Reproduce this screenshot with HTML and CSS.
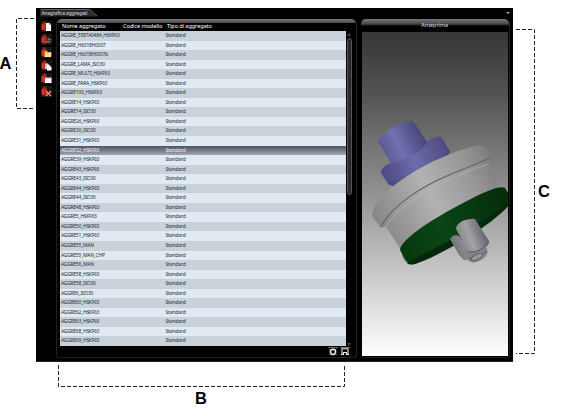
FILE: index.html
```
<!DOCTYPE html>
<html lang="it">
<head>
<meta charset="utf-8">
<title>Anagrafica aggregati</title>
<link rel="stylesheet" href="styles.css">
</head>
<body>
<div class="figure">
  <svg class="callout-a" viewBox="0 0 36 354"><path class="dash" d="M34 10.500H16.500V100.500H34"/><text x="-.5" y="61">A</text></svg>
  <main class="window">
    <header class="titlebar"><div class="tab"><svg viewBox="0 0 64 8" preserveAspectRatio="none"><path d="M0 1Q1 0 3 0H53Q55 0 57 3L63 7.500H0Z" fill="#2b2b2b"/><path d="M1 .5H53Q55 .5 57 3L62 7" fill="none" stroke="#727272" stroke-width=".8"/></svg><span>Anagrafica aggregati</span></div><svg class="arrow" viewBox="0 0 4 2"><path d="M0 0H4L2 2Z"/></svg></header>
    <div class="content">
      <nav class="tools">
        <svg viewBox="0 0 11 11"><use href="#drum"/><path d="M5 2H8L10 4V10H5Z" fill="#fff"/><path d="M8 2V4H10" fill="#bbb"/></svg>
        <svg viewBox="0 0 11 11"><use href="#drum"/><path d="M5 7L7 4L10 6L9 8H5Z" fill="#37352e"/><path d="M4.500 8H9.500M7 4.500L10 6" stroke="#a49a75" fill="none"/></svg>
        <svg viewBox="0 0 11 11"><use href="#drum"/><path d="M3.500 4H6L7 5H10V10H3.500Z" fill="#e9b64d"/><path d="M4.500 6H10.500L10 10H3.500Z" fill="#ffe08c"/></svg>
        <svg viewBox="0 0 11 11"><use href="#drum"/><path d="M4 3.500H7L9 6V9H4Z" fill="#c9c9c9"/><path d="M6 5H8L10.500 7.500V10.500H6Z" fill="#fff"/></svg>
        <svg viewBox="0 0 11 11"><use href="#drum"/><path d="M4 5H10.500V10H4Z" fill="#fff"/><path d="M4 5H10.500" stroke="#c8b9b9"/></svg>
        <svg viewBox="0 0 11 11"><use href="#drum"/><path d="M5 5L10 10M10 5L5 10" stroke="#ee8580" stroke-width="1.500"/></svg>
      </nav>
      <section class="list-panel">
        <div class="columns"><span>Nome aggregato</span><span>Codice modello</span><span>Tipo di aggregato</span></div>
        <div class="table-area">
          <div class="rows" id="rows"></div>
          <div class="scroll"><svg viewBox="0 0 4 3"><path d="M0 3L2 0L4 3Z"/></svg><i></i><svg class="down" viewBox="0 0 4 3"><path d="M0 0H4L2 3Z"/></svg></div>
        </div>
        <footer class="actions">
          <svg viewBox="0 0 10 9"><path d="M0 .5H10" stroke="#666"/><circle cx="5" cy="4.800" r="2.600" fill="none" stroke="#eee" stroke-width="1.500"/><path d="M1.500 2L3 3M8.500 2L7 3M1.500 7.500L3 6.500M8.500 7.500L7 6.500" stroke="#bbb"/></svg>
          <svg viewBox="0 0 10 9"><path d="M0 .5H10" stroke="#777"/><path d="M2 8V1.700H8V8M3.500 8V5.500H6.500V8" fill="none" stroke="#e4e4e4" stroke-width="1.100"/><path d="M1 7.500H3M7 7.500H9" stroke="#eee"/></svg>
        </footer>
      </section>
      <section class="preview-panel">
        <h2>Anteprima</h2>
        <svg class="preview" viewBox="362 32 146 324" preserveAspectRatio="none">
          <defs>
            <g id="drum"><path d="M.5 3L2.500 2V.5H4.500V2L6 3V8.500L4 10L.5 8.500Z" fill="#b52718"/><path d="M2 3.500V8.500" stroke="#e35c40"/></g>
            <linearGradient id="bg" x2="0" y2="1"><stop stop-color="#363636"/><stop offset=".2" stop-color="#555"/><stop offset=".5" stop-color="#929292"/><stop offset=".75" stop-color="#cacaca"/><stop offset="1" stop-color="#fff"/></linearGradient>
            <linearGradient id="blue" gradientUnits="userSpaceOnUse" x1="382" y1="160" x2="447" y2="130"><stop stop-color="#504f87"/><stop offset=".4" stop-color="#6e6cac"/><stop offset="1" stop-color="#464476"/></linearGradient>
            <linearGradient id="neck" gradientUnits="userSpaceOnUse" x1="381" y1="150" x2="422" y2="130"><stop stop-color="#5a5994"/><stop offset=".4" stop-color="#7270b0"/><stop offset="1" stop-color="#454377"/></linearGradient>
            <linearGradient id="gray" gradientUnits="userSpaceOnUse" x1="375" y1="225" x2="500" y2="160"><stop stop-color="#858585"/><stop offset=".45" stop-color="#b3b1b1"/><stop offset=".75" stop-color="#999"/><stop offset="1" stop-color="#777"/></linearGradient>
            <linearGradient id="green" gradientUnits="userSpaceOnUse" x1="400" y1="250" x2="507" y2="200"><stop stop-color="#06370d"/><stop offset=".4" stop-color="#0a4517"/><stop offset="1" stop-color="#042d0a"/></linearGradient>
            <linearGradient id="shaft" gradientUnits="userSpaceOnUse" x1="454" y1="244" x2="487" y2="231"><stop stop-color="#77757a"/><stop offset=".5" stop-color="#a3a1a7"/><stop offset="1" stop-color="#5c5a61"/></linearGradient>
          </defs>
          <path d="M362 32H508V356H362Z" fill="url(#bg)"/>
          <path d="M381 173C381 168 385 165 391 163L427 141C434 137 440 135 442 138L450 151L448 156L451 164L397 193L395 187L388 184Z" fill="url(#blue)"/>
          <path d="M378 142C381 132 401 121 413 121L427 142C423 151 404 161 391 163Z" fill="url(#neck)"/>
          <path d="M388 184C404 183 440 164 450 152" fill="none" stroke="#44437a"/><path d="M395 187Q421 180 448 158" fill="none" stroke="#44437a" stroke-width="1.500"/><path d="M401 186Q425 179 446 162" fill="none" stroke="#6967a3" stroke-width="1.500"/>
          <path d="M372 216C372 201 398 179 430 163C456 151 480 142 485 147L490 156L489 164L498 187L505 197C500 215 454 247 415 262C408 265 403 264 401 250L387 228L380 227Z" fill="url(#gray)"/>
          <path d="M381 227C388 211 411 193 438 180C461 169 480 163 490 158" fill="none" stroke="#646464" stroke-width="1.200"/><path d="M385 229C392 212 418 195 443 183C465 172 481 166 489 164" fill="none" stroke="#bcbcbc" stroke-width=".6"/>
          <path d="M400 250C401 239 432 219 465 202C484 192 500 185 505 188L508 193V206C492 223 444 249 415 264C407 266 405 259 400 250Z" fill="url(#green)"/>
          <path d="M407 263.500C418 256 432 251 450 240C472 227 498 214 507 202L508 206C492 225 440 256 415 264Q410 265 407 263.500Z" fill="#032709"/>
          <path d="M450 239C452 235 457 234 460 237L468 250L471 256Q469 261 464 260L459 255Z" fill="url(#shaft)"/>
          <path d="M465 249L486 246L488 252Q485 260 476 262Q470 264 467 258Z" fill="#858389"/>
          <path d="M456 229C456 222 468 218 475 219L489 241C491 246 477 254 468 252Z" fill="url(#shaft)"/>
          <path d="M468 252Q481 253 488 243M469 258Q477 261 486 251" fill="none" stroke="#55535a"/><ellipse cx="477" cy="257" rx="6" ry="2.500" transform="rotate(-27 477 257)" fill="#99979d" stroke="#66636a"/>
        </svg>
      </section>
    </div>
  </main>
  <svg class="callout-c" viewBox="0 0 54 354"><path class="dash" d="M3 21.500H21.500V345.500H3"/><text x="25" y="189">C</text></svg>
  <svg class="callout-b" viewBox="0 0 567 54"><path class="dash" d="M58.500 3V24.500H344.500V3"/><text x="195" y="42">B</text></svg>
</div>
<script src="rows.js"></script>
</body>
</html>
```
FILE: styles.css
```
* { box-sizing: border-box; }
body { margin: 0; background: #fff; font-family: "Noto Sans", sans-serif; }
.figure { width: 567px; height: 416px; padding-top: 8px; display: grid; grid-template: 354px 54px / 36px 477px 54px; overflow: hidden; }
.figure > svg { display: block; width: 100%; height: 100%; }
.callout-b { grid-column: 1 / -1; }
.dash { fill: none; stroke: #222; stroke-width: 1; stroke-dasharray: 4 2; }
.figure > svg text { font: bold 16.5px "Liberation Sans", Arial, sans-serif; fill: #000; }
.window { background: #000; padding: 1px 1px 0; color: #fff; border-bottom: 1px solid #222; }
.titlebar { height: 8px; display: flex; justify-content: space-between; padding: 0 2px 0 3px; }
.tab { width: 59px; height: 8px; display: grid; }
.tab > * { grid-area: 1 / 1; width: 100%; height: 8px; min-width: 0; }
.tab span { z-index: 1; padding-left: 1.5px; font-size: 5px; line-height: 9px; color: #ddd; white-space: nowrap; letter-spacing: -.17px; }
.arrow { width: 4px; height: 2px; margin-top: 3px; fill: #aaa; }
.content { display: grid; grid-template-columns: 17px 301px 149px; column-gap: 3px; height: 341px; }
.tools { display: flex; flex-direction: column; gap: 2px; padding: 4px 0 0 4px; }
.tools svg { flex: none; width: 11px; height: 11px; background: #1c1716; display: block; }
.list-panel, .preview-panel { border: 1px solid #202020; border-top: 0; border-radius: 5px 5px 3px 3px; margin-top: 2px; }
.list-panel { margin-left: -1px; width: 301px; }
.columns { height: 12px; display: grid; grid-template-columns: 61px 44px 1fr; padding-left: 5px; border-radius: 5px 5px 0 0; background: linear-gradient(#777 0, #4b4b4b 4px, #000 4px); font-size: 5.6px; letter-spacing: -.1px; line-height: 14px; white-space: nowrap; }
.table-area { display: flex; height: 315px; padding-left: 3px; }
.rows { width: 286px; display: grid; grid-template-rows: repeat(33, 1fr); background: #e1eaf2; }
.row { display: grid; grid-template-columns: 104.500px 1fr; padding-left: 1px; font-size: 5px; line-height: 9.9px; min-height: 0; color: #27303a; white-space: nowrap; }
.row:nth-child(odd) { background: #c9d1d9; }
.row.selected { background: linear-gradient(#51535f, #7f8391 60%, #a4a8b5); color: #eef0f4; }
.row span { min-width: 0; letter-spacing: -.28px; }
.row span + span { letter-spacing: -.15px; }
.scroll { width: 6px; display: flex; flex-direction: column; align-items: center; padding-top: 2px; }
.scroll svg { width: 4px; height: 3px; fill: #4a4a4a; }
.scroll i { width: 5px; height: 157px; margin-top: 2px; border: 1px solid #555; border-radius: 3px; background: #292929; }
.scroll .down { margin-top: auto; }
.actions { height: 11px; display: flex; justify-content: flex-end; gap: 2px; padding: 1px 6px 0 0; }
.actions svg { width: 10px; height: 9px; }
.preview-panel { border-left-width: 0; padding: 0 1px 0 .5px; }
.preview-panel h2 { height: 12px; margin: 0 -1px 1px; border-radius: 5px 5px 0 0; background: linear-gradient(178deg, #777 0, #4b4b4b 6px, #000 7px); background: linear-gradient(#777 0, #484848 5px, #000 7px); font: 5.4px/13px "Noto Sans", sans-serif; text-align: center; color: #ddd; }
.preview { display: block; width: 146px; height: 324px; }
```
FILE: rows.js
```
const names = `AGGRE_5587A0484_HSKF63
AGGRE_H6318H0007
AGGRE_H6318H0007b
AGGRE_LAMA_ISO30
AGGRE_MULTI_HSKF63
AGGRE_PARA_HSKF63
AGGRE100_HSKF63
AGGRE14_HSKF63
AGGRE14_ISO30
AGGRE26_HSKF63
AGGRE30_ISO30
AGGRE31_HSKF63
AGGRE32_HSKF63
AGGRE39_HSKF63
AGGRE43_HSKF63
AGGRE43_ISO30
AGGRE44_HSKF63
AGGRE44_ISO30
AGGRE48_HSKF63
AGGRE5_HSKF63
AGGRE50_HSKF63
AGGRE51_HSKF63
AGGRE55_MAN
AGGRE55_MAN_CHP
AGGRE56_MAN
AGGRE58_HSKF63
AGGRE58_ISO30
AGGRE6_ISO30
AGGRE60_HSKF63
AGGRE62_HSKF63
AGGRE63_HSKF63
AGGRE68_HSKF63
AGGRE69_HSKF63`.split("\n");
document.getElementById("rows").innerHTML = names.map((name, i) =>
  `<div class="row${i === 12 ? " selected" : ""}"><span>${name}</span><span>Standard</span></div>`
).join("");
```
